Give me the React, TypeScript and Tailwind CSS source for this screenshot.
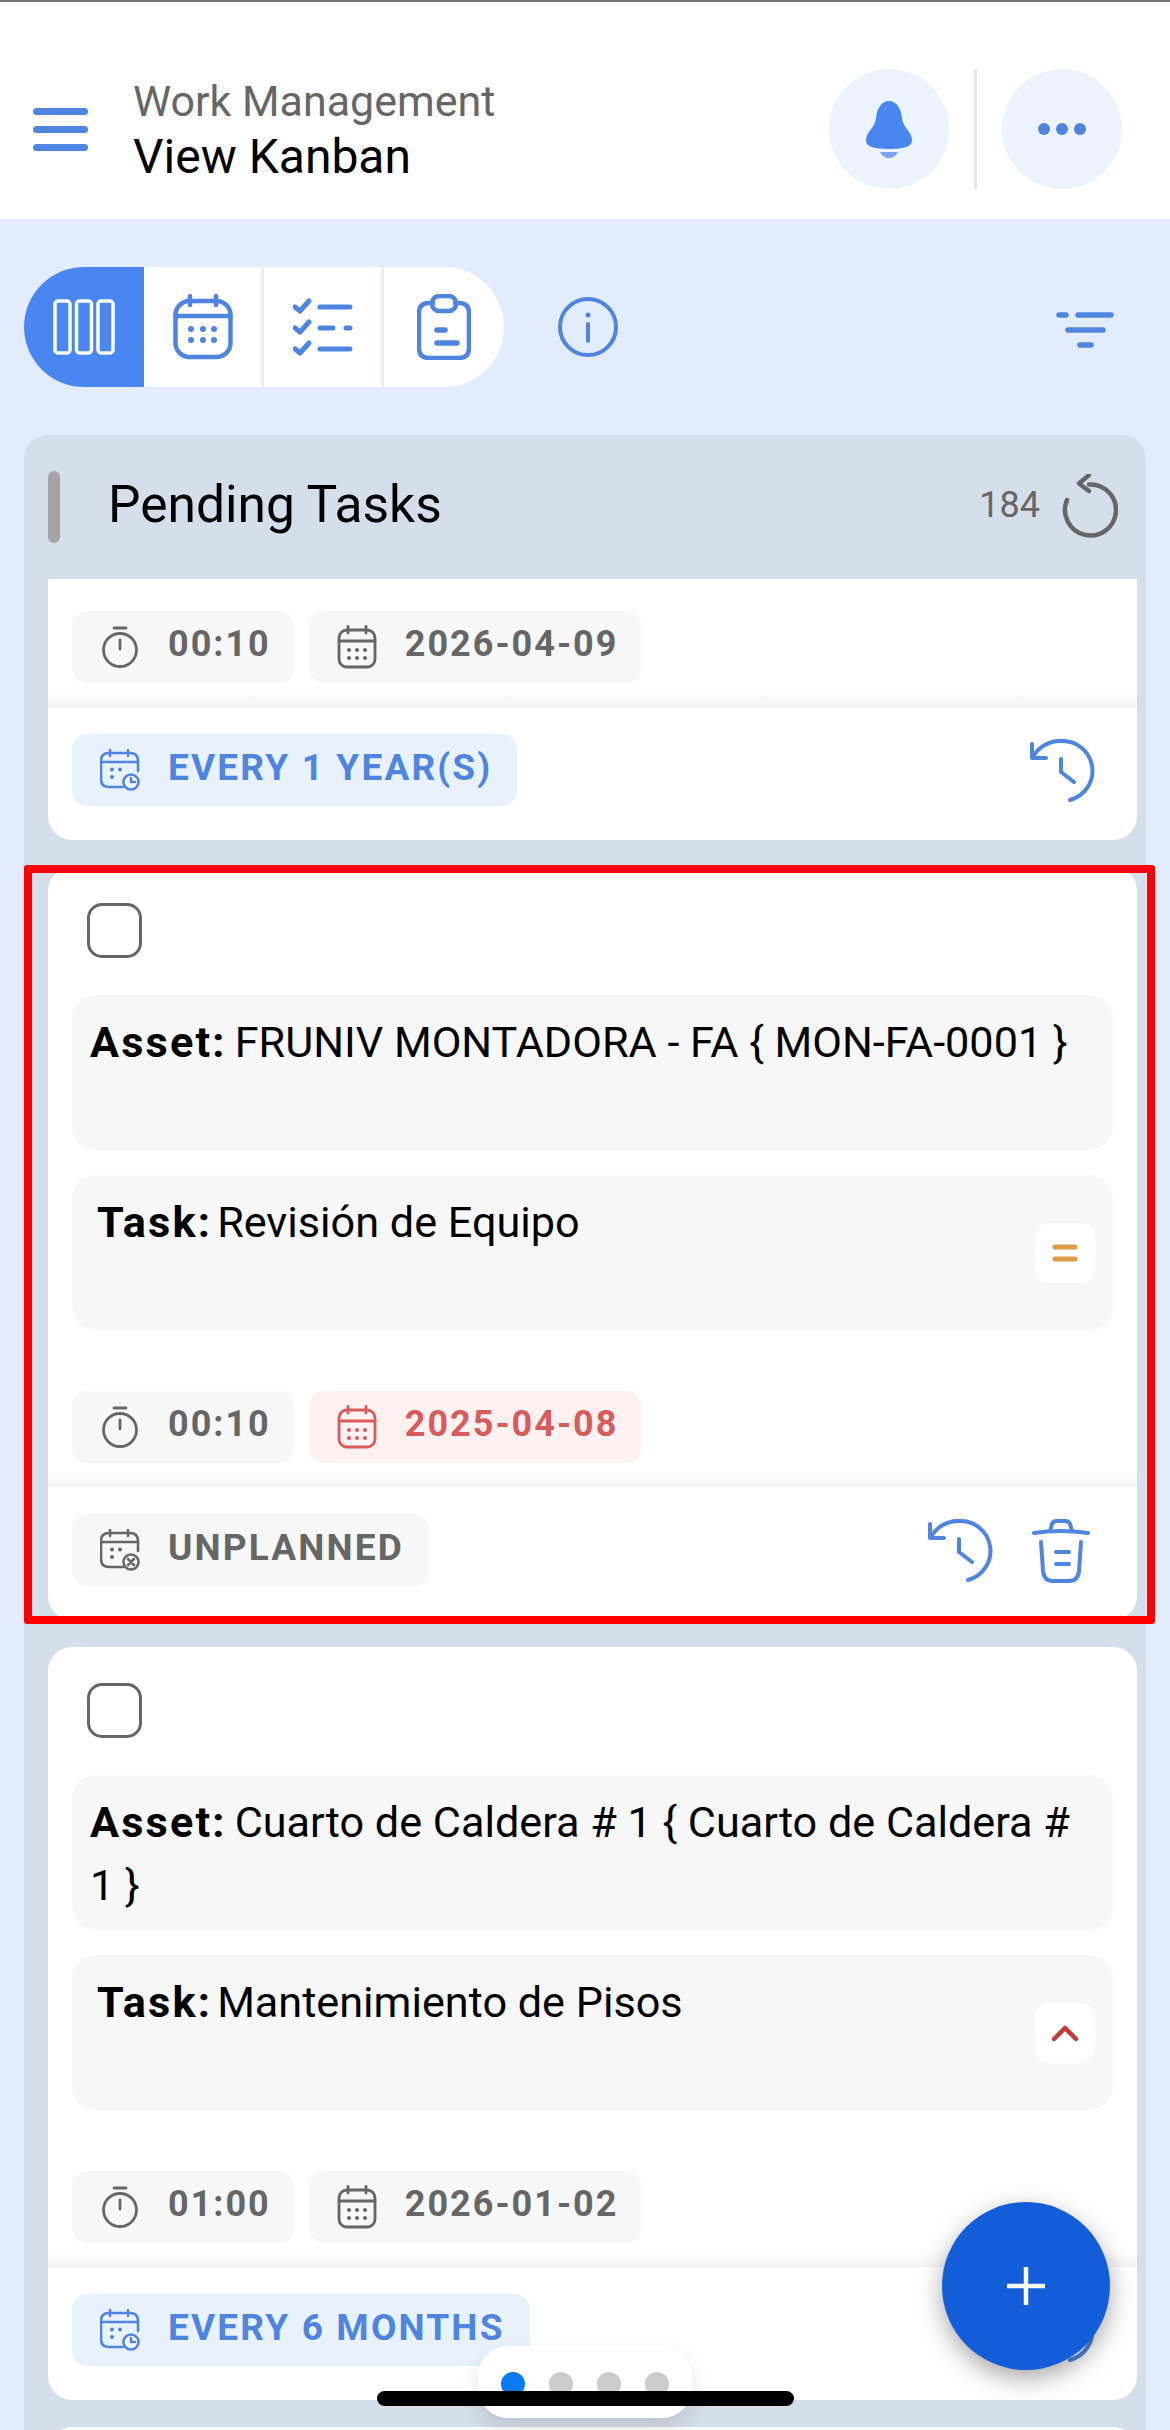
import React from "react";

const BLUE = "#4f85e0";

function Cal({ color, size = 40, h = 44 }: { color: string; size?: number; h?: number }) {
  return (
    <svg width={size} height={h} viewBox="0 0 40 44" fill="none" stroke={color} strokeWidth="2.8" strokeLinecap="round" className="shrink-0">
      <rect x="2" y="5" width="36" height="37" rx="8" />
      <path d="M2 16H38M11 1.5V8M29 1.5V8" />
      <g fill={color} stroke="none">
        <circle cx="12" cy="25" r="2" /><circle cx="20" cy="25" r="2" /><circle cx="28" cy="25" r="2" />
        <circle cx="12" cy="33" r="2" /><circle cx="20" cy="33" r="2" /><circle cx="28" cy="33" r="2" />
      </g>
    </svg>
  );
}

function Stopwatch() {
  return (
    <svg width="40" height="42" viewBox="0 0 40 42" fill="none" stroke="#666" strokeWidth="2.8" strokeLinecap="round" className="shrink-0">
      <circle cx="20" cy="24" r="16.5" />
      <path d="M14 2H26M20 14V23" />
    </svg>
  );
}

function CalBadge({ color, kind }: { color: string; kind: "clock" | "x" }) {
  return (
    <svg width="40" height="42" viewBox="0 0 40 42" fill="none" stroke={color} strokeWidth="2.6" strokeLinecap="round" className="shrink-0">
      <path d="M38 22V12Q38 4 30 4H9Q1 4 1 12V30Q1 38 9 38H23" />
      <path d="M1 13H38M10 1V7M28 1V7" />
      <g fill={color} stroke="none">
        <circle cx="12" cy="20.5" r="2" /><circle cx="20" cy="20.5" r="2" /><circle cx="12" cy="28" r="2" />
      </g>
      <circle cx="31" cy="33" r="7.5" fill="#fff" fillOpacity="0.6" />
      {kind === "clock" ? <path d="M31 29V33H35" /> : <path d="M28 30L34 36M34 30L28 36" />}
    </svg>
  );
}

function History() {
  return (
    <svg width="66" height="64" viewBox="0 0 66 64" fill="none" stroke={BLUE} strokeWidth="4" strokeLinecap="round" strokeLinejoin="round" className="shrink-0">
      <path d="M3 5V19H17" />
      <path d="M4 18A31 31 0 0 1 32 2A30 30 0 0 1 41 61" />
      <path d="M32 20V33L45 43" />
    </svg>
  );
}

function Trash() {
  return (
    <svg width="58" height="64" viewBox="0 0 58 64" fill="none" stroke={BLUE} strokeWidth="4" strokeLinecap="round" strokeLinejoin="round" className="shrink-0">
      <path d="M2 14Q28 10 56 14" />
      <path d="M18 12L20 5Q21 2 25 2H33Q37 2 38 5L40 12" />
      <path d="M9 23L11 52Q12 62 21 62H37Q46 62 47 52L49 23" />
      <path d="M24 33H37M24 45H37" />
    </svg>
  );
}

function Chip({ tone, icon, label, children }: { tone: "gray" | "red" | "blue"; icon: React.ReactNode; label?: boolean; children: React.ReactNode }) {
  const cls =
    tone === "gray" ? "bg-[#f7f7f7] text-[#666666]" : tone === "red" ? "bg-[#fef1f1] text-[#d95c5c]" : "bg-[#e9f1fc] text-[#4f85e0]";
  const size = label ? "pr-[25px] text-[37px] tracking-[2.15px]" : "pr-[23px] text-[36px] tracking-[2px]";
  return (
    <div className={`flex h-[72px] items-center gap-[28px] rounded-[15px] pl-[28px] font-bold ${size} ${cls}`}>
      <span className="flex w-[40px] shrink-0 justify-center">{icon}</span>
      <span className="whitespace-nowrap leading-none pb-[6px]">{children}</span>
    </div>
  );
}

function Footer({ tone, kind, label, trash }: { tone: "gray" | "blue"; kind: "clock" | "x"; label: string; trash?: boolean }) {
  return (
    <>
      <div className="h-[16px] bg-linear-to-b from-white to-[#f4f4f4]" />
      <div className={`flex h-[133px] items-start justify-between pl-[24px] pt-[27px] ${trash ? "pr-[47px]" : "pr-[42px]"}`}>
        <Chip tone={tone} label icon={<CalBadge color={tone === "gray" ? "#666666" : BLUE} kind={kind} />}>{label}</Chip>
        <div className="flex items-center gap-[39px] pt-[5px]">
          <History />
          {trash && <Trash />}
        </div>
      </div>
    </>
  );
}

function TimeRow({ time, date, red }: { time: string; date: string; red?: boolean }) {
  return (
    <div className="mb-[8px] flex gap-[15px] pl-[24px]">
      <Chip tone="gray" icon={<Stopwatch />}>{time}</Chip>
      <Chip tone={red ? "red" : "gray"} icon={<Cal color={red ? "#d95c5c" : "#666666"} />}>{date}</Chip>
    </div>
  );
}

function TaskCard({ asset, task, time, date, red, priority, tone, kind, label, trash, highlight }: {
  asset: string; task: string; time: string; date: string; red?: boolean; priority: "medium" | "high";
  tone: "gray" | "blue"; kind: "clock" | "x"; label: string; trash?: boolean; highlight?: boolean;
}) {
  return (
    <div className="relative mb-[27px] rounded-[24px] bg-white pt-[36px]">
      <div className="ml-[39px] size-[55px] rounded-[15px] border-[3px] border-[#666666]" />
      <div className="mx-[24px] mt-[37px] h-[155px] rounded-[24px] bg-[#f7f7f7] pl-[18px] pr-[24px] pt-[16px] text-[43.2px] leading-[63px] text-black">
        <span className="mr-[8px] font-bold tracking-[2.2px]">Asset:</span>{asset}
      </div>
      <div className="mx-[24px] mt-[25px] flex h-[155px] items-center justify-between rounded-[24px] bg-[#f7f7f7] pl-[25px] pr-[18px]">
        <div className="self-start pt-[16px] text-[43.2px] leading-[63px] text-black">
          <span className="mr-[5px] font-bold tracking-[2.2px]">Task:</span>{task}
        </div>
        <div className="flex size-[60px] items-center justify-center rounded-[14px] bg-white">
          {priority === "medium" ? (
            <svg width="26" height="18" viewBox="0 0 26 18" fill="none" stroke="#e09a4a" strokeWidth="5" strokeLinecap="round">
              <path d="M3 3H23M3 15H23" />
            </svg>
          ) : (
            <svg width="28" height="18" viewBox="0 0 28 18" fill="none" stroke="#c23a3a" strokeWidth="4.5" strokeLinecap="round" strokeLinejoin="round">
              <path d="M3 15L14 4L25 15" />
            </svg>
          )}
        </div>
      </div>
      <div className="h-[61px]" />
      <TimeRow time={time} date={date} red={red} />
      <Footer tone={tone} kind={kind} label={label} trash={trash} />
      {highlight && (
        <div className="absolute -bottom-[4px] -left-[24px] -right-[18px] -top-[2px] rounded-[3px] border-[8px] border-[#ff0000]" />
      )}
    </div>
  );
}

export default function App() {
  return (
    <div className="relative h-[2430px] w-[1170px] overflow-hidden bg-[#e2ecfd] font-[Roboto,sans-serif]">
      <header className="flex h-[219px] items-center justify-between border-t-2 border-[#777777] bg-white pl-[33px] pr-[48px] pt-[37px]">
        <div className="flex items-center gap-[45px]">
          <div className="flex w-[55px] flex-col gap-[11px]">
            <div className="h-[7px] rounded-full bg-[#4f85e0]" />
            <div className="h-[7px] rounded-full bg-[#4f85e0]" />
            <div className="h-[7px] rounded-full bg-[#4f85e0]" />
          </div>
          <div className="flex flex-col">
            <span className="text-[43px] leading-[55px] text-[#666666]">Work Management</span>
            <span className="text-[48px] leading-[55px] text-black">View Kanban</span>
          </div>
        </div>
        <div className="flex items-center">
          <div className="flex size-[120px] items-center justify-center rounded-full bg-[#edf3fd]">
            <svg width="46" height="57" viewBox="0 0 46 57">
              <path d="M23 0C31 0 35 8 36 17C37 27 46 31 46 39C46 45 40 48 23 48C6 48 0 45 0 39C0 31 9 27 10 17C11 8 15 0 23 0Z" fill="#4a86f0" />
              <path d="M14 51H32C30 55 27 57 23 57C19 57 16 55 14 51Z" fill="#7aa6f2" />
            </svg>
          </div>
          <div className="mx-[25px] h-[120px] w-[3px] bg-[#e6e6e6]" />
          <div className="flex size-[120px] items-center justify-center gap-[6px] rounded-full bg-[#edf3fd]">
            <div className="size-[12px] rounded-full bg-[#4f85e0]" />
            <div className="size-[12px] rounded-full bg-[#4f85e0]" />
            <div className="size-[12px] rounded-full bg-[#4f85e0]" />
          </div>
        </div>
      </header>

      <div className="flex h-[216px] items-start justify-between pl-[24px] pr-[56px] pt-[48px]">
        <div className="flex items-center gap-[54px]">
          <div className="flex h-[120px] overflow-hidden rounded-full bg-white">
            <div className="flex w-[120px] items-center justify-center bg-[#4a86f0]">
              <svg width="62" height="56" viewBox="0 0 62 56" fill="none" stroke="#fff" strokeWidth="3.5">
                <rect x="2" y="2" width="15" height="52" rx="3" />
                <rect x="23.5" y="2" width="15" height="52" rx="3" />
                <rect x="45" y="2" width="15" height="52" rx="3" />
              </svg>
            </div>
            <div className="flex w-[120px] items-center justify-center border-r-[3px] border-[#e8effb]">
              <Tabcal />
            </div>
            <div className="flex w-[120px] items-center justify-center border-r-[3px] border-[#e8effb]">
              <svg width="60" height="58" viewBox="0 0 60 58" fill="none" stroke={BLUE} strokeWidth="5" strokeLinecap="round" strokeLinejoin="round">
                <path d="M2 9L7 13L16 3M2 30L7 34L16 24M2 51L7 55L16 45" />
                <path d="M27 9H57M27 30H40M53 30H57M27 51H57" />
              </svg>
            </div>
            <div className="flex w-[120px] items-center justify-center">
              <svg width="54" height="66" viewBox="0 0 54 66" fill="none" stroke={BLUE} strokeWidth="4.5" strokeLinecap="round" strokeLinejoin="round">
                <path d="M16 9H12Q2 9 2 19V54Q2 64 12 64H42Q52 64 52 54V19Q52 9 42 9H38" />
                <rect x="15" y="2" width="24" height="15" rx="7" />
                <path d="M20 36H28M20 49H40" strokeWidth="5.5" />
              </svg>
            </div>
          </div>
          <svg width="60" height="60" viewBox="0 0 60 60" fill="none" stroke={BLUE} strokeWidth="4" strokeLinecap="round">
            <circle cx="30" cy="30" r="28" />
            <path d="M30 27V44" />
            <circle cx="30" cy="18" r="2.5" fill={BLUE} stroke="none" />
          </svg>
        </div>
        <svg width="58" height="38" viewBox="0 0 58 38" fill="none" stroke={BLUE} strokeWidth="5.5" strokeLinecap="round" className="mt-[45px]">
          <path d="M3 3H10M22 3H55M12 18H47M24 33H35" />
        </svg>
      </div>

      <section className="mx-[24px] rounded-t-[24px] bg-[#d5dfeb] pl-[24px] pr-[9px]">
        <div className="-mr-[9px] flex h-[144px] items-center justify-between pr-[28px]">
          <div className="flex items-center gap-[48px]">
            <div className="h-[72px] w-[12px] rounded-full bg-[#a4a4a4]" />
            <span className="pb-[4px] text-[51.5px] leading-none text-black">Pending Tasks</span>
          </div>
          <div className="flex items-center gap-[22px]">
            <span className="pb-[4px] text-[36px] leading-none text-[#666666]">184</span>
            <svg width="56" height="66" viewBox="0 0 56 66" fill="none" stroke="#666666" strokeWidth="4.5" strokeLinecap="round" strokeLinejoin="round">
              <path d="M27 10.5A25.5 25.5 0 1 1 5 26" />
              <path d="M27 1L17 9.5L27 17" />
            </svg>
          </div>
        </div>

        <div className="mb-[27px] rounded-b-[24px] bg-white pt-[32px]">
          <TimeRow time="00:10" date="2026-04-09" />
          <Footer tone="blue" kind="clock" label="EVERY 1 YEAR(S)" />
        </div>

        <TaskCard highlight asset="FRUNIV MONTADORA - FA { MON-FA-0001 }" task="Revisión de Equipo" time="00:10" date="2025-04-08" red priority="medium" tone="gray" kind="x" label="UNPLANNED" trash />
        <TaskCard asset="Cuarto de Caldera # 1 { Cuarto de Caldera # 1 }" task="Mantenimiento de Pisos" time="01:00" date="2026-01-02" priority="high" tone="blue" kind="clock" label="EVERY 6 MONTHS" />
        <div className="h-[40px] rounded-t-[24px] bg-white" />
      </section>

      <button className="absolute left-[942px] top-[2202px] flex size-[168px] items-center justify-center rounded-full bg-[#135dd8] shadow-[0_8px_24px_rgba(0,0,0,0.35)]">
        <svg width="38" height="38" viewBox="0 0 38 38" stroke="#fff" strokeWidth="4.5"><path d="M19 0V38M0 19H38" /></svg>
      </button>

      <div className="absolute left-[478px] top-[2346px] flex h-[72px] w-[214px] items-start justify-center gap-[24px] rounded-[30px] bg-white pt-[26px] shadow-[0_10px_20px_rgba(0,0,0,0.12)]">
        <div className="size-[24px] rounded-full bg-[#0a7bf5]" />
        <div className="size-[24px] rounded-full bg-[#cccccc]" />
        <div className="size-[24px] rounded-full bg-[#cccccc]" />
        <div className="size-[24px] rounded-full bg-[#cccccc]" />
      </div>
      <div className="absolute left-[377px] top-[2391px] h-[15px] w-[417px] rounded-full bg-black" />
    </div>
  );
}

function Tabcal() {
  return (
    <svg width="60" height="66" viewBox="0 0 60 66" fill="none" stroke={BLUE} strokeWidth="4.5" strokeLinecap="round">
      <rect x="2.5" y="7" width="55" height="56" rx="14" />
      <path d="M2.5 22H57.5M17 2V11M43 2V11" />
      <g fill={BLUE} stroke="none">
        <circle cx="18" cy="35" r="3" /><circle cx="30" cy="35" r="3" /><circle cx="41" cy="35" r="3" />
        <circle cx="18" cy="46" r="3" /><circle cx="30" cy="46" r="3" /><circle cx="41" cy="46" r="3" />
      </g>
    </svg>
  );
}
